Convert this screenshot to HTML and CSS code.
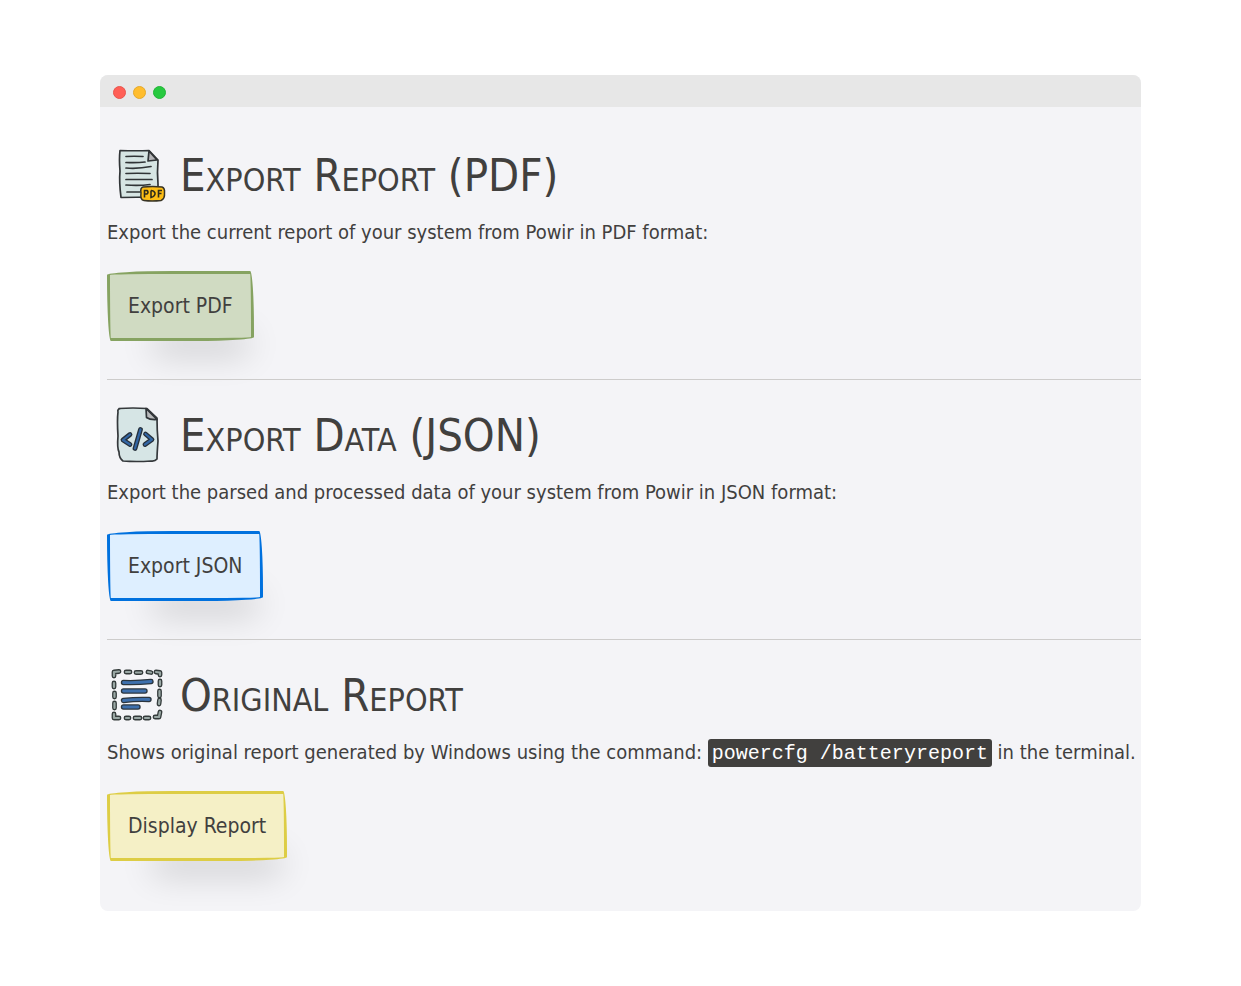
FILE: index.html
```html
<!DOCTYPE html>
<html lang="en">
<head>
<meta charset="utf-8">
<meta name="viewport" content="width=device-width, initial-scale=1">
<title>Powir</title>
<link rel="stylesheet" href="styles.css">
</head>
<body>
<div class="window">
  <div class="titlebar">
    <span class="dot dot-close"></span>
    <span class="dot dot-minimize"></span>
    <span class="dot dot-zoom"></span>
  </div>
  <main class="content">
    <section class="section">
      <h2 class="heading">
        <svg class="icon" viewBox="0 0 60 60" aria-hidden="true">
          <path d="M13 4.500Q30 5 42 4.500L51 14Q50 27 51 38V49Q51 52 45 51L14 51.500Q12 36 13 25Q12 13 13 4.500Z" fill="#d6e5e3" stroke="#303436" stroke-width="1.700" stroke-linejoin="round"/>
          <path d="M42 5L41 15L50 14Z" fill="#b4b4b7" stroke="#303436" stroke-width="1.700" stroke-linejoin="round"/>
          <path d="M19 10.500Q27 10 36 10.500M19 16.500Q30 17 38 16M19 22Q31 23 44 20.500M19 27.500Q30 27 43 27.500M19 33.500H45M19 39Q32 40 43 38.500M20 46H33" fill="none" stroke="#303436" stroke-width="1.700" stroke-linecap="round"/>
          <path d="M36 41Q46 40 55 41Q58 42 57.500 47Q58 53 54 54.500Q45 55.500 37 54.500Q33 54 34 47Q33 42 36 41Z" fill="#fdbd14" stroke="#383425" stroke-width="1.500"/>
          <path d="M37.500 51.500V44.500H40Q42 46 40 48H37.500M44 44.500V51.500Q48.500 50 48 47Q47 44.500 44 44.500M51.500 51.500V44.500H55M51.500 47.500H54.500" fill="none" stroke="#302c1b" stroke-width="1.600"/>
        </svg>
        <span>Export Report (PDF)</span>
      </h2>
      <p class="text">Export the current report of your system from Powir in PDF format:</p>
      <button class="button button-green" type="button">Export PDF</button>
    </section>
    <section class="section">
      <h2 class="heading">
        <svg class="icon" viewBox="0 0 60 60" aria-hidden="true">
          <path d="M12 2.500Q26 1.500 40 2.500L50 12Q50 24 51 35Q50 48 50 53Q48 55.500 44 55Q29 56 16 55Q12 52 12 46Q10 42 11 30Q10 14 11 6Q10 3 14 2.500Z" fill="#d6e5e5" stroke="#34383b" stroke-width="1.700" stroke-linejoin="round"/>
          <path d="M39 2.500L39.500 11.500Q43 14 50 13.500Z" fill="#b9babc" stroke="#303438" stroke-width="1.700" stroke-linejoin="round"/>
          <path d="M23 28.500L16 34L23 38.500M38.500 28L45 33.500L38 38.500M33.500 23.500L28 42.500" fill="none" stroke="#26303b" stroke-width="4.800" stroke-linecap="round" stroke-linejoin="round"/>
          <path d="M23 28.500L16 34L23 38.500M38.500 28L45 33.500L38 38.500M33.500 23.500L28 42.500" fill="none" stroke="#3266a4" stroke-width="2.200" stroke-linecap="round" stroke-linejoin="round"/>
        </svg>
        <span>Export Data (JSON)</span>
      </h2>
      <p class="text">Export the parsed and processed data of your system from Powir in JSON format:</p>
      <button class="button button-blue" type="button">Export JSON</button>
    </section>
    <section class="section">
      <h2 class="heading">
        <svg class="icon" viewBox="0 0 60 60" aria-hidden="true">
          <path d="M7 10V6L12 5.500M19 6H23M29 6.500H34M41 6L44 6.500M49 6L53 6.500V9M7 17V21M7.500 27V31M7.500 37V42M7 48V52H12M19 52H22M28 52H33M38 52H42M53 15V19M52.500 25V30M52.500 34L52 38M53 46L52 51H48" fill="none" stroke="#343b3b" stroke-width="4.800" stroke-linecap="round" stroke-linejoin="round"/>
          <path d="M7 10V6L12 5.500M19 6H23M29 6.500H34M41 6L44 6.500M49 6L53 6.500V9M7 17V21M7.500 27V31M7.500 37V42M7 48V52H12M19 52H22M28 52H33M38 52H42M53 15V19M52.500 25V30M52.500 34L52 38M53 46L52 51H48" fill="none" stroke="#9aa8a5" stroke-width="2.200" stroke-linecap="round" stroke-linejoin="round"/>
          <path d="M16.500 16.500Q30 17 44 15.500M16.500 25H38M16.500 34.500Q29 33 42 33.500M16.500 41H31" fill="none" stroke="#2b353e" stroke-width="5.400" stroke-linecap="round"/>
          <path d="M16.500 16.500Q30 17 44 15.500M16.500 25H38M16.500 34.500Q29 33 42 33.500M16.500 41H31" fill="none" stroke="#3e70ad" stroke-width="2.800" stroke-linecap="round"/>
        </svg>
        <span>Original Report</span>
      </h2>
      <p class="text">Shows original report generated by Windows using the command: <code class="code">powercfg /batteryreport</code> in the terminal.</p>
      <button class="button button-yellow" type="button">Display Report</button>
    </section>
  </main>
</div>
</body>
</html>
```
FILE: styles.css
```css
* {
  box-sizing: border-box;
}

body {
  margin: 0;
  padding: 75px 100px;
  background: #fff;
  color: #41403e;
  font-family: "DejaVu Sans Condensed", sans-serif;
  font-size: 20px;
  line-height: 30px;
}

.window {
  overflow: hidden;
  border-radius: 8px;
  background: #f4f4f7;
}

.titlebar {
  display: flex;
  align-items: center;
  gap: 7px;
  height: 32px;
  padding: 2px 13px 0;
  background: #e7e7e7;
}

.dot {
  width: 13px;
  height: 13px;
  border: 1px solid;
  border-radius: 50%;
}

.dot-close {
  background: #ff5f56;
  border-color: #e8554d;
}

.dot-minimize {
  background: #ffbd2e;
  border-color: #e5a92a;
}

.dot-zoom {
  background: #27c93f;
  border-color: #22b438;
}

.content {
  padding: 39px 0 50px 7px;
}

.section + .section {
  margin-top: 38px;
  padding-top: 26px;
  border-top: 1px solid #cdcccb;
}

.heading {
  display: flex;
  align-items: center;
  gap: 13px;
  min-height: 60px;
  margin: 0;
  font-size: 45px;
  font-weight: 400;
  font-variant: small-caps;
  line-height: 60px;
}

.icon {
  flex: none;
  width: 60px;
  height: 60px;
}

.text {
  margin: 11px 0 24px;
}

.code {
  padding: 3px 4px 2px;
  border-radius: 3px;
  background: #41403e;
  color: #fff;
  font-family: "Liberation Mono", monospace;
  font-size: 20px;
  line-height: 20px;
}

.button {
  display: block;
  padding: 17px 18px;
  border: 3px solid;
  border-radius: 255px 15px 225px 15px / 15px 225px 15px 255px;
  box-shadow: 20px 38px 34px -26px rgba(0, 0, 0, 0.2);
  color: #41403e;
  font: inherit;
  font-size: 21px;
  cursor: pointer;
}

.button-green {
  border-color: #86a361;
  background: #d0dbc2;
}

.button-blue {
  border-color: #0071de;
  background: #deefff;
}

.button-yellow {
  border-color: #ddcd45;
  background: #f5f0c6;
}
```
